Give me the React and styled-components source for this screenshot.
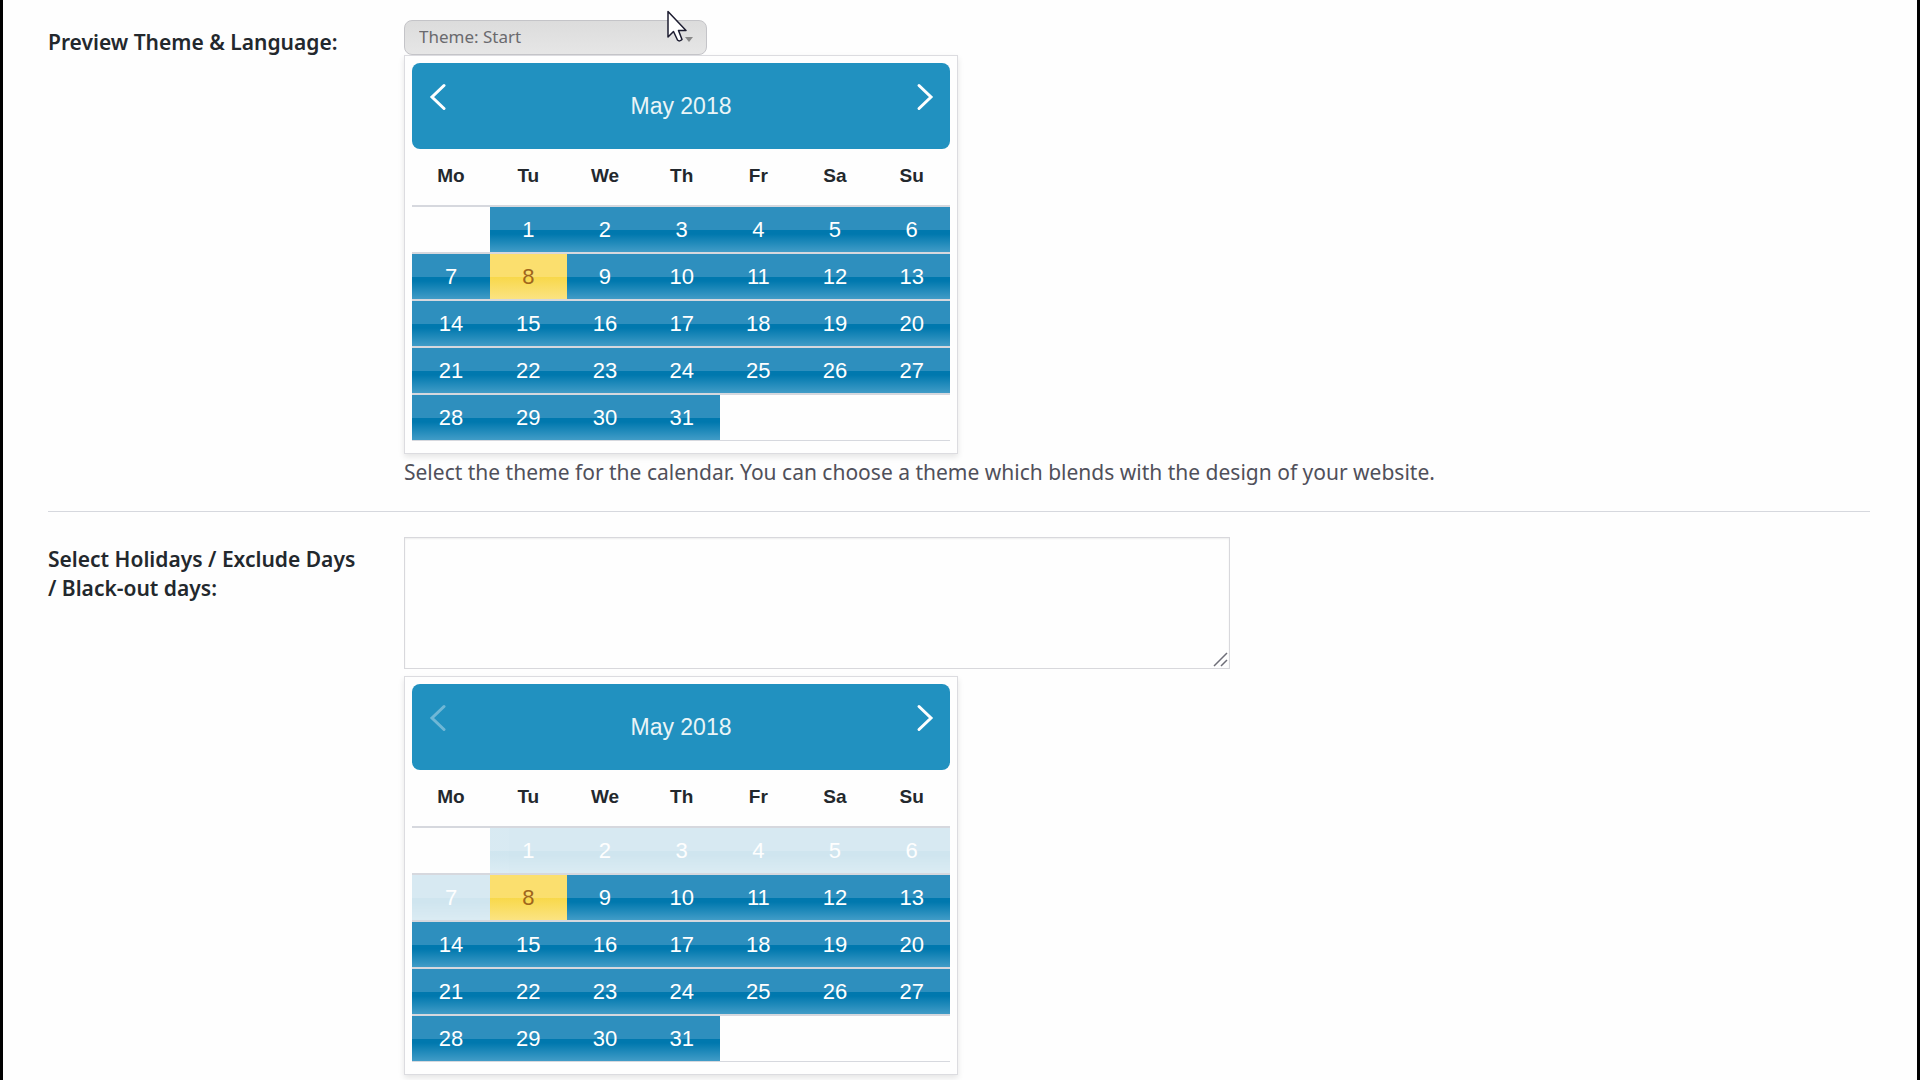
import React from 'react';
import styled, { createGlobalStyle } from 'styled-components';

const WEEKDAYS = ['Mo', 'Tu', 'We', 'Th', 'Fr', 'Sa', 'Su'];
const TODAY = 8;

// May 2018 starts on the second column
const buildWeeks = (offset, total) => {
    const cells = [...Array(offset).fill(null), ...Array.from({ length: total }, (_, i) => i + 1)];
    while (cells.length % 7) cells.push(null);

    return Array.from({ length: cells.length / 7 }, (_, i) => cells.slice(i * 7, i * 7 + 7));
};

const Chevron = ({ next }) => (
    <svg width="18" height="28" viewBox="0 0 18 28" fill="none" stroke="currentColor" strokeWidth="3" strokeLinecap="round">
        <path d={next ? 'M3 2.5 L15 14 L3 25.5' : 'M16 2.5 L4 14 L16 25.5'} />
    </svg>
);

const Calendar = ({ minDay = 1 }) => (
    <CalendarBox>
        <CalendarHeader>
            <NavButton type="button" aria-label="Prev" disabled={minDay > 1}><Chevron /></NavButton>
            <Month>May 2018</Month>
            <NavButton type="button" aria-label="Next"><Chevron next /></NavButton>
        </CalendarHeader>
        <Days>
            <thead>
                <tr>
                    {WEEKDAYS.map(day => <Weekday key={day} scope="col">{day}</Weekday>)}
                </tr>
            </thead>
            <tbody>
                {buildWeeks(1, 31).map((week, index) => (
                    <tr key={index}>
                        {week.map((day, i) => (
                            <DayCell key={i}>
                                {day && <Day type="button" $today={day === TODAY} disabled={day < minDay}>{day}</Day>}
                            </DayCell>
                        ))}
                    </tr>
                ))}
            </tbody>
        </Days>
    </CalendarBox>
);

const App = () => (
    <Page>
        <GlobalStyle />
        <Row>
            <Label htmlFor="theme">Preview Theme &amp; Language:</Label>
            <Field>
                <Picker>
                    <Select id="theme" defaultValue="start">
                        <option value="start">Theme: Start</option>
                    </Select>
                    <Caret width="8" height="5" viewBox="0 0 8 5"><path d="M0 0 H8 L4 5 Z" fill="#888" /></Caret>
                    <Cursor width="22" height="34" viewBox="0 0 22 34">
                        <path
                            d="M2 1.5 V27 L7.5 21.5 L11.5 30 Q13.5 32 16 29.5 L12.5 20.5 H20 Z"
                            fill="#fff"
                            stroke="#1c1c30"
                            strokeWidth="1.5"
                            strokeLinejoin="round"
                        />
                    </Cursor>
                </Picker>
                <Calendar />
                <Description>
                    Select the theme for the calendar. You can choose a theme which blends with the design of your website.
                </Description>
            </Field>
        </Row>
        <Row $divided>
            <Label htmlFor="holidays">Select Holidays / Exclude Days / Black-out days:</Label>
            <Field>
                <TextBox>
                    <Textarea id="holidays" />
                    <Grip width="15" height="15" viewBox="0 0 15 15" stroke="#6e6e78" strokeWidth="1.5">
                        <path d="M1 14 L14 1 M8 14 L14 8" />
                    </Grip>
                </TextBox>
                <Calendar minDay={TODAY} />
            </Field>
        </Row>
    </Page>
);

export default App;

const GlobalStyle = createGlobalStyle`
    * {
        box-sizing: border-box;
    }
    body {
        margin: 0;
        background-color: #fefefe;
        overflow: hidden;
    }
`;

const Page = styled.main`
    min-height: 100vh;
    padding: 0 47px 0 45px;
    border: solid #000;
    border-width: 0 3px;
    font-family: 'Noto Sans', 'Open Sans', sans-serif;
    font-size: 21px;
    line-height: 29px;
    color: #23282d;
`;

const Row = styled.section`
    display: grid;
    grid-template-columns: 356px 1fr;
    padding: ${({ $divided }) => ($divided ? '25px 0 5px' : '20px 0 24px')};
    border-top: ${({ $divided }) => ($divided ? '1px solid #d6d8de' : 'none')};
`;

const Label = styled.label`
    padding: 8px 36px 0 0;
    font-weight: 600;
`;

const Field = styled.div`
    display: flex;
    flex-direction: column;
    align-items: flex-start;
    min-width: 0;
`;

const Picker = styled.div`
    position: relative;
    width: 303px;
`;

const Select = styled.select`
    display: block;
    width: 100%;
    height: 35px;
    padding: 0 14px 2px;
    border: 1px solid #c4c4c8;
    border-radius: 8px;
    appearance: none;
    background: linear-gradient(#dcdcdc, #e6e6e6);
    color: #6a6a6e;
    font-family: inherit;
    font-size: 17px;
`;

const Caret = styled.svg`
    position: absolute;
    right: 14px;
    top: 17px;
`;

const Cursor = styled.svg`
    position: absolute;
    right: 19px;
    top: -10px;
`;

const CalendarBox = styled.div`
    width: 554px;
    max-width: 100%;
    padding: 7px 7px 12px;
    border: 1px solid #dcdce0;
    background-color: #fefefe;
    box-shadow: 0 3px 6px rgba(0, 0, 0, 0.1);
    font-family: 'Liberation Sans', Arial, sans-serif;
`;

const CalendarHeader = styled.div`
    display: flex;
    justify-content: space-between;
    height: 86px;
    padding: 20px 16px;
    border-radius: 8px;
    background-color: #2191c0;
    color: #eaf5f7;
`;

const NavButton = styled.button`
    height: 28px;
    padding: 0;
    border: 0;
    background: none;
    color: #fff;
    line-height: 0;
    opacity: ${({ disabled }) => (disabled ? 0.35 : 1)};
`;

const Month = styled.div`
    align-self: center;
    font-size: 23px;
`;

const Days = styled.table`
    width: 100%;
    table-layout: fixed;
    border-collapse: separate;
    border-spacing: 0;
    tbody tr:last-child td {
        border-bottom: 1px solid #d6d8de;
    }
`;

const Weekday = styled.th`
    height: 56px;
    padding: 0 0 3px;
    font-size: 19px;
    font-weight: bold;
    &:first-child {
        width: 78px;
    }
`;

const DayCell = styled.td`
    height: 47px;
    padding: 0;
    border-top: 2px solid #d6d8de;
`;

const Day = styled.button`
    display: block;
    width: 100%;
    height: 45px;
    padding: 0;
    border: 0;
    background: ${({ $today }) => ($today
        ? 'linear-gradient(#fbdf6e 0, #fbdf6e 50%, #f8d84a 51%, #fbe382 100%)'
        : 'linear-gradient(#2e8fbe 0, #2e8fbe 50%, #0078ae 51%, #0078ae 60%, #419cc7 100%)')};
    color: ${({ $today }) => ($today ? '#a0661c' : '#fff')};
    font-family: inherit;
    font-size: 22px;
    opacity: ${({ disabled }) => (disabled ? 0.18 : 1)};
`;

const Description = styled.p`
    margin: 4px 0 0;
    color: #50505a;
`;

const TextBox = styled.div`
    position: relative;
    width: 826px;
    max-width: 100%;
    margin-bottom: 7px;
`;

const Textarea = styled.textarea`
    display: block;
    width: 100%;
    height: 132px;
    padding: 8px;
    border: 1px solid #d8d8dc;
    background-color: #fefefe;
    box-shadow: inset 0 1px 2px rgba(0, 0, 0, 0.07);
    font: inherit;
    resize: none;
`;

const Grip = styled.svg`
    position: absolute;
    right: 2px;
    bottom: 2px;
`;
